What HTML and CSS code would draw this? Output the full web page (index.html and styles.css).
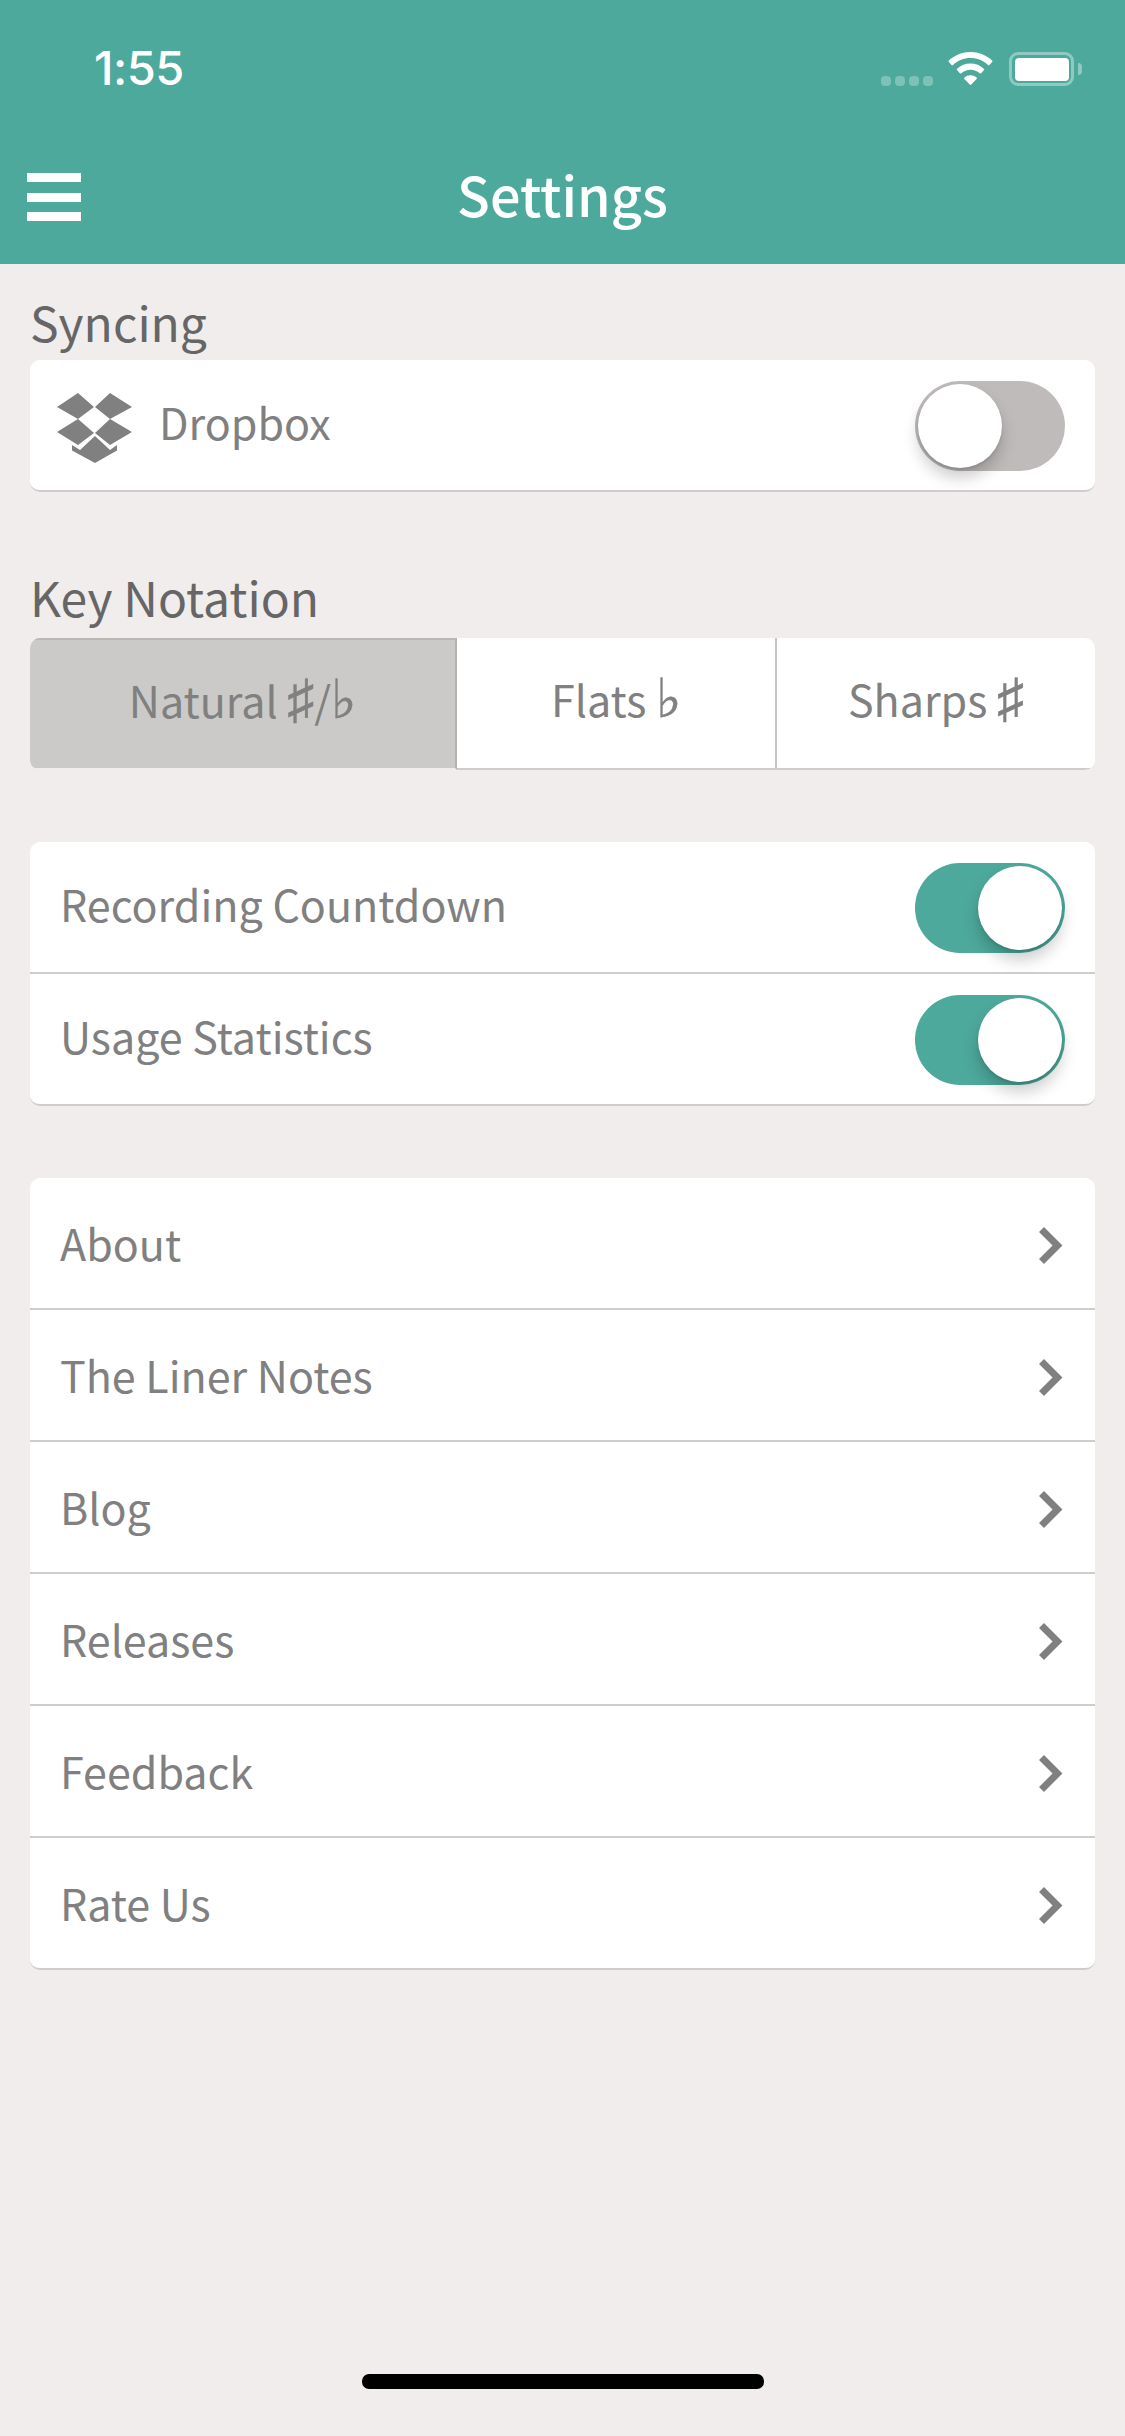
FILE: index.html
```html
<!DOCTYPE html>
<html lang="en">
<head>
<meta charset="utf-8">
<title>Settings</title>
<link rel="stylesheet" href="styles.css">
</head>
<body>
<div class="screen">
  <header class="appbar">
    <div class="statusbar">
      <span class="time">1:55</span>
      <div class="status-icons">
        <span class="signal"><i></i><i></i><i></i><i></i></span>
        <svg class="wifi" width="45" height="33" viewBox="0 0 44 33"><path fill="#fff" d="M22 0c8.300 0 15.900 3.200 21.600 8.500.5.400.5 1.100 0 1.600l-2.700 2.900c-.4.400-1.100.4-1.500 0C34.800 8.700 28.700 6.100 22 6.100S9.200 8.700 4.600 13c-.4.400-1.100.4-1.500 0L.4 10.100c-.5-.5-.5-1.200 0-1.600C6.100 3.200 13.700 0 22 0zm0 11.600c5.100 0 9.700 1.900 13.300 5.100.5.400.5 1.100 0 1.600l-2.700 2.900c-.4.400-1.100.4-1.500 0-2.400-2.100-5.600-3.400-9.100-3.400s-6.700 1.300-9.100 3.400c-.4.400-1.100.4-1.500 0l-2.700-2.900c-.5-.5-.5-1.200 0-1.600 3.600-3.200 8.200-5.100 13.300-5.100zm0 11.700c2.300 0 4.400.8 6 2.200.5.400.5 1.100.1 1.500l-5.300 5.600c-.4.500-1.200.5-1.600 0L15.900 27c-.4-.4-.4-1.100.1-1.500 1.600-1.400 3.700-2.200 6-2.200z"/></svg>
        <span class="battery"><span class="battery-fill"></span></span>
        <span class="battery-cap"></span>
      </div>
    </div>
    <div class="navbar">
      <button class="menu" aria-label="Menu"><i></i><i></i><i></i></button>
      <h1 class="title">Settings</h1>
    </div>
  </header>

  <main class="content">
    <h2 class="label label-first">Syncing</h2>
    <section class="card">
      <div class="row row-switch">
        <svg class="dropbox" width="75" height="70" viewBox="0 0 75 70"><path fill="#808080" d="M21 0 0 14 21 26 37 14zM53 0 38 14 53 26 75 14zM0 39 21 26 37 40 21 52zM75 39 53 26 38 40 53 52zM15 52 23 57 38 43 53 57 60 52V57.500L38 70 15 57.500z"/></svg>
        <span class="row-text">Dropbox</span>
        <span class="toggle"><span class="knob"></span></span>
      </div>
    </section>

    <h2 class="label label-next">Key Notation</h2>
    <section class="card segments">
      <div class="segment selected"><span>Natural <span class="acc">♯</span>/<span class="acc">♭</span></span></div>
      <div class="segment flats"><span>Flats <span class="acc">♭</span></span></div>
      <div class="segment sharps"><span>Sharps <span class="acc">♯</span></span></div>
    </section>

    <section class="card group">
      <div class="row row-switch"><span class="row-text">Recording Countdown</span><span class="toggle on"><span class="knob"></span></span></div>
      <div class="row row-switch"><span class="row-text">Usage Statistics</span><span class="toggle on"><span class="knob"></span></span></div>
    </section>

    <section class="card group">
      <div class="row"><span class="row-text">About</span><svg class="chevron" width="24" height="37" viewBox="0 0 24 37"><path d="M2.500 2.500 18.500 18.500 2.500 34.500" fill="none" stroke="#808080" stroke-width="7"/></svg></div>
      <div class="row"><span class="row-text">The Liner Notes</span><svg class="chevron" width="24" height="37" viewBox="0 0 24 37"><path d="M2.500 2.500 18.500 18.500 2.500 34.500" fill="none" stroke="#808080" stroke-width="7"/></svg></div>
      <div class="row"><span class="row-text">Blog</span><svg class="chevron" width="24" height="37" viewBox="0 0 24 37"><path d="M2.500 2.500 18.500 18.500 2.500 34.500" fill="none" stroke="#808080" stroke-width="7"/></svg></div>
      <div class="row"><span class="row-text">Releases</span><svg class="chevron" width="24" height="37" viewBox="0 0 24 37"><path d="M2.500 2.500 18.500 18.500 2.500 34.500" fill="none" stroke="#808080" stroke-width="7"/></svg></div>
      <div class="row"><span class="row-text">Feedback</span><svg class="chevron" width="24" height="37" viewBox="0 0 24 37"><path d="M2.500 2.500 18.500 18.500 2.500 34.500" fill="none" stroke="#808080" stroke-width="7"/></svg></div>
      <div class="row"><span class="row-text">Rate Us</span><svg class="chevron" width="24" height="37" viewBox="0 0 24 37"><path d="M2.500 2.500 18.500 18.500 2.500 34.500" fill="none" stroke="#808080" stroke-width="7"/></svg></div>
    </section>
  </main>

  <div class="home-area"><span class="home-indicator"></span></div>
</div>
</body>
</html>
```
FILE: styles.css
```css
* { box-sizing: border-box; }
html, body { margin: 0; padding: 0; }
body {
  background: #f1eded;
  font-family: "Noto Sans CJK JP", "Noto Sans", sans-serif;
}
.screen {
  width: 1125px;
  height: 2436px;
  display: flex;
  flex-direction: column;
  overflow: hidden;
}
.appbar {
  height: 264px;
  flex: none;
  background: #4da99c;
  color: #fff;
  display: flex;
  flex-direction: column;
}
.statusbar {
  height: 132px;
  display: flex;
  align-items: flex-start;
  justify-content: space-between;
  padding: 46px 43px 0 94px;
}
.time {
  font-family: Inter, Roboto, sans-serif;
  font-size: 47px;
  line-height: 44px;
  font-weight: 500;
  letter-spacing: -0.5px;
}
.status-icons {
  display: flex;
  align-items: flex-start;
  padding-top: 6px;
}
.signal {
  display: flex;
  gap: 4px;
  margin: 24px 15px 0 0;
}
.signal i {
  width: 10px;
  height: 10px;
  border-radius: 4px;
  background: rgba(255, 255, 255, .28);
}
.wifi { margin-right: 16px; }
.battery {
  width: 65px;
  height: 34px;
  border: 3.500px solid rgba(255, 255, 255, .38);
  border-radius: 9px;
  padding: 2.500px;
  display: flex;
}
.battery-fill {
  flex: 1;
  background: #fff;
  border-radius: 4px;
}
.battery-cap {
  width: 4px;
  height: 12px;
  margin: 11px 0 0 4px;
  border-radius: 0 4px 4px 0;
  background: rgba(255, 255, 255, .38);
}
.navbar {
  flex: 1;
  position: relative;
  display: flex;
  align-items: center;
  justify-content: center;
  padding-bottom: 8px;
}
.menu {
  position: absolute;
  left: 27px;
  top: 41px;
  width: 54px;
  height: 48px;
  padding: 0;
  border: 0;
  background: none;
  display: flex;
  flex-direction: column;
  justify-content: space-between;
}
.menu i {
  display: block;
  height: 9px;
  background: #fff;
}
.title {
  margin: 0;
  font-size: 54px;
  line-height: 64px;
  font-weight: 500;
}
.content {
  flex: 1;
  padding: 0 30px;
}
.label {
  margin: 0;
  font-size: 48px;
  font-weight: 400;
  color: #666;
}
.label-first { height: 96px; padding-top: 27px; line-height: 60px; }
.label-next { margin-top: 74px; height: 72px; line-height: 60px; }
.card {
  background: #fff;
  border-radius: 10px;
  border-bottom: 2px solid #cfcccb;
  overflow: hidden;
}
.row {
  height: 132px;
  padding: 0 30px;
  display: flex;
  align-items: center;
  border-bottom: 2px solid #cfcccb;
}
.row:last-child { height: 130px; border-bottom: 0; }
.row-text {
  flex: 1;
  font-size: 43px;
  line-height: 60px;
  color: #808080;
  padding-bottom: 3px;
}
.row-switch .row-text { padding-bottom: 9px; }
.dropbox { margin: 6px 27px 0 -3px; flex: none; }
.toggle {
  flex: none;
  width: 150px;
  height: 90px;
  margin-top: 2px;
  border-radius: 45px;
  background: #bfbbba;
  padding: 3px;
  display: flex;
}
.toggle.on {
  background: #4da99c;
  justify-content: flex-end;
}
.knob {
  width: 84px;
  height: 84px;
  border-radius: 50%;
  background: #fff;
  box-shadow: 0 10px 16px rgba(0, 0, 0, .2), 0 2px 3px rgba(0, 0, 0, .1);
}
.chevron { flex: none; margin: 4px 2px 0 0; }
.segments {
  display: grid;
  grid-template-columns: 427px 320px 318px;
  height: 132px;
  border-bottom: 0;
}
.segment {
  height: 132px;
  display: flex;
  align-items: center;
  justify-content: center;
  padding-bottom: 11px;
  font-size: 43px;
  line-height: 60px;
  color: #808080;
  border-right: 2px solid #c9c7c6;
  border-bottom: 2px solid #cfcccb;
}
.segment:last-child { border-right: 0; }
.segment.selected {
  background: #cbcac8;
  border-top: 2px solid #b9b8b6;
  border-right-color: #b4b3b1;
  border-bottom-color: #f1eded;
}
.acc {
  font-family: Lato, sans-serif;
  font-size: 54px;
  line-height: 0;
  -webkit-text-stroke: .5px currentColor;
}
.group { margin-top: 72px; }
.home-area {
  height: 38px;
  margin-bottom: 24px;
  display: flex;
  justify-content: center;
  flex: none;
}
.home-indicator {
  width: 402px;
  height: 15px;
  border-radius: 7px;
  background: #000;
}
```
